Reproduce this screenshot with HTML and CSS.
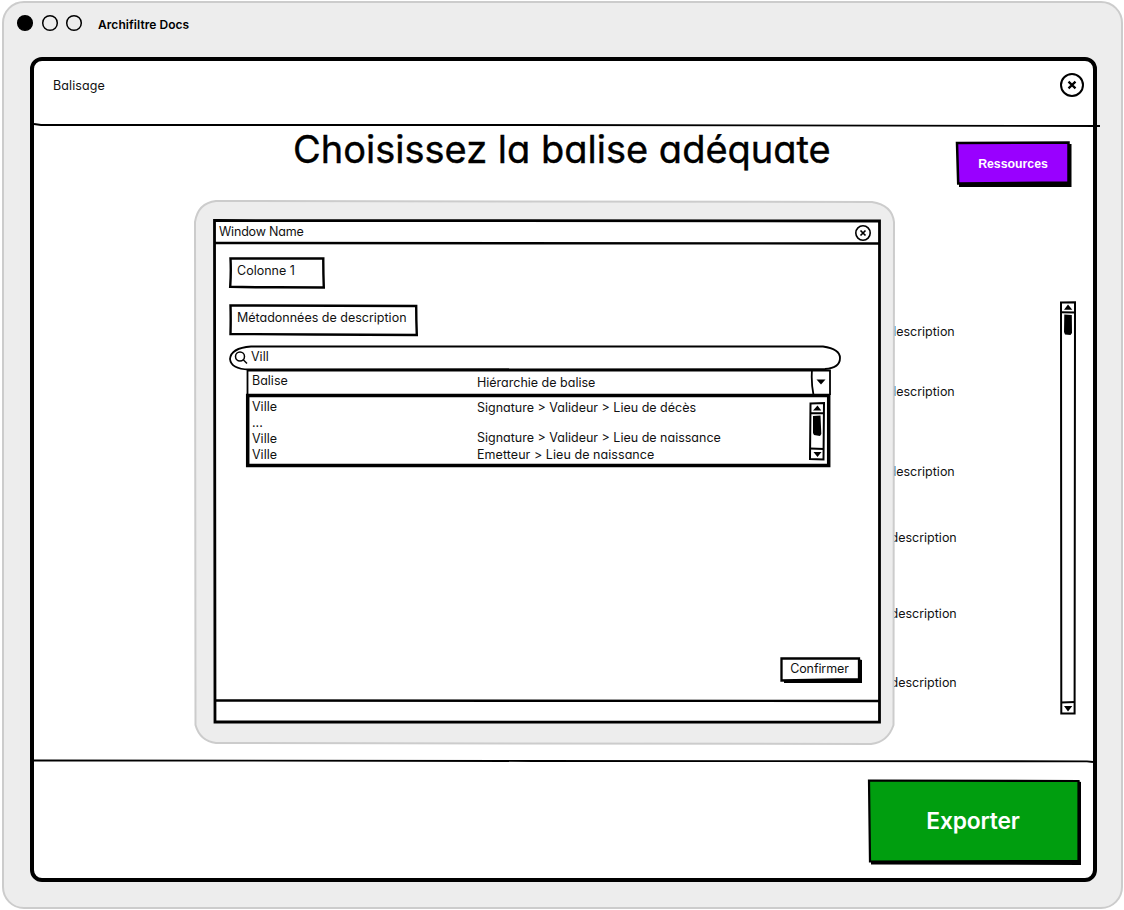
FILE: index.html
```html
<!DOCTYPE html>
<html lang="fr">
<head>
<meta charset="utf-8">
<title>Archifiltre Docs</title>
<link rel="stylesheet" href="styles.css">
</head>
<body>
<div class="app">
  <header class="app-bar">
    <svg class="dots" width="60" height="18" viewBox="0 0 60 18"><circle class="solid" cx="9" cy="9" r="7.3"/><circle cx="34" cy="9" r="7.3"/><circle cx="58" cy="9" r="7.3"/></svg>
    <span class="app-name">Archifiltre Docs</span>
  </header>
  <section class="page">
    <header class="page-head">
      <span class="page-name">Balisage</span>
      <svg class="close" width="24" height="24" viewBox="0 0 24 24"><circle cx="12" cy="12" r="11"/><path class="cross" d="M8.5 8.7l7 6.600M15.5 8.700l-7 6.600"/></svg>
    </header>
    <svg class="rule" width="1066" height="4" viewBox="0 0 1066 4"><path d="M0 1L7 2L500 2L1066 3"/></svg>
    <main class="main">
      <h1 class="title">Choisissez la balise adéquate</h1>
      <div class="side">
        <button class="btn btn-violet">
          <svg class="sketch" width="117" height="46" viewBox="0 0 117 46"><path class="fill" d="M3 41L111 41 112 3 115.500 3V46H3Z"/><path class="violet" d="M1 2L112.500 1.500 112.500 41.500 2.200 42.500Z"/></svg>
          <span>Ressources</span>
        </button>
        <div class="results">
          <ul class="descs">
            <li>description</li><li>description</li><li>description</li><li>description</li><li>description</li><li>description</li>
          </ul>
          <svg class="bar" width="16" height="414" viewBox="0 0 16 414"><path d="M1 1.500L15 1.200 14.600 412.500 1.300 412.500Z"/><path d="M1 11.300L15 11.500M1 401.500L15 401"/><path class="fill" d="M4 8.800L8 3.500 12.300 8.800ZM4 405L12.300 405 8 410.500ZM4.300 13.500L11.800 14 12 32 10.500 34 5 33.500 4 31Z"/></svg>
        </div>
      </div>
    </main>
    <footer class="page-foot">
      <svg class="rule" width="1059" height="4" viewBox="0 0 1059 4"><path d="M0 1.500L500 2 1053 2.300 1059 3"/></svg>
      <button class="btn btn-green">
        <svg class="sketch" width="213" height="86" viewBox="0 0 213 86"><path class="fill" d="M3 81L208 80 209 2 213 3V86L3 85.500Z"/><path class="green" d="M1 1.500L210.500 2 210.500 82 2 82.500Z"/></svg>
        <span>Exporter</span>
      </button>
    </footer>
  </section>
</div>

<div class="modal" role="dialog">
  <svg class="sketch" width="701" height="545" viewBox="0 0 701 545"><path class="frame" d="M22 1L678 2Q698 5 700 22L699.500 525Q694 542 677 544L22 543Q6 541 1.500 525L1 22Q4 3 22 1Z"/></svg>
  <div class="dialog">
    <svg class="sketch" width="669" height="505" viewBox="0 0 669 505"><path class="heavy" d="M1.500 1.500L666.500 2 666.500 503.200 2 503Z"/><path class="mid" d="M1 24L667 24.500M2 481.500L667 482"/></svg>
    <div class="dialog-bar"><span class="t-window">Window Name</span>
      <svg class="close small" width="16" height="16" viewBox="0 0 16 16"><circle cx="8" cy="8" r="7.200"/><path class="cross" d="M5.500 5.500l5 5M10.500 5.500l-5 5"/></svg>
    </div>
    <div class="dialog-body">
      <div class="field field-col"><svg class="sketch" width="96" height="32" viewBox="0 0 96 32"><path d="M1.500 1.500L94.300 1.500Q94.200 14 94.800 30.500L48 30.300Q20 30.300 1.200 29.800Q2.200 15 1.500 1.500Z"/></svg><span>Colonne 1</span></div>
      <div class="field field-meta"><svg class="sketch" width="189" height="32" viewBox="0 0 189 32"><path d="M1.500 1.500L187.200 2Q187.200 15 187.800 31L85 30.500 1.500 30Q1.900 14 1.500 1.500Z"/></svg><span>Métadonnées de description</span></div>
      <div class="search">
        <svg class="sketch" width="612" height="26" viewBox="0 0 612 26"><path class="thin" d="M22 1.500L594 1.500Q611 4 611 13Q611 23 596 24L20 24.500Q2 24 1 14Q2 3 22 1.500Z"/><circle class="lens" cx="11" cy="11.500" r="4.500"/><path class="lens" d="M14 14.500L18 18.500"/></svg>
        <span>Vill</span>
      </div>
      <div class="combo">
        <svg class="sketch" width="585" height="98" viewBox="0 0 585 98"><path class="thin" d="M1.500 0V26M1 .5H584V25M566 0Q565 12 567.500 25"/><path class="fill" d="M570.500 9.500H579.500L575 14.500Z"/><path class="list" d="M1.700 25.500H582.700V95.500H1.700Z"/></svg>
        <div class="combo-head"><span class="t-balise">Balise</span><span class="t-hier">Hiérarchie de balise</span></div>
        <div class="combo-list">
          <div class="names"><span>Ville</span><span>...</span><span>Ville</span><span>Ville</span></div>
          <div class="paths"><span>Signature &gt; Valideur &gt; Lieu de décès</span><span>Signature &gt; Valideur &gt; Lieu de naissance</span><span class="t-emetteur">Emetteur &gt; Lieu de naissance</span></div>
          <svg class="bar" width="16" height="59" viewBox="0 0 16 59"><path d="M1.500 1.500L15 1 14.500 57.500 1 57Z"/><path d="M1 11.300H15M1 46.500L15 47"/><path class="fill" d="M4 8.500L8.500 3.500 12.300 8.500ZM4.500 50L12.500 50 8.500 55ZM4 14L11.500 13.500 12.300 32 11 34 5 33 4 31Z"/></svg>
        </div>
      </div>
      <button class="btn btn-confirm">
        <svg class="sketch" width="82" height="26" viewBox="0 0 82 26"><path class="fill" d="M4 23Q30 20 56 22L78 22 78 2 82 3V26H4Z"/><path class="white" d="M1.500 1.500L79 1.500V22.500L57 22.500 1.500 23.500Z"/></svg>
        <span>Confirmer</span>
      </button>
    </div>
  </div>
</div>
</body>
</html>
```
FILE: styles.css
```css
* { box-sizing: border-box; }
body {
  margin: 0;
  width: 1124px;
  height: 910px;
  overflow: hidden;
  position: relative;
  background: #fff;
  color: #111;
  font: 12.5px/16px Inter, "Liberation Sans", sans-serif;
  font-feature-settings: "cv11";
}
span, li, h1 { white-space: nowrap; }
svg { display: block; fill: none; stroke: #000; stroke-width: 2; overflow: visible; }
svg .fill { fill: #000; stroke: none; }
button { font: inherit; font-feature-settings: inherit; color: inherit; border: 0; padding: 0; background: none; }
.sketch { position: absolute; left: 0; top: 0; z-index: -1; }

.app {
  margin-left: 2px;
  width: 1121px;
  height: 908px;
  padding-left: 26px;
  border: 2px solid #ccc;
  border-radius: 22px;
  background: #ededed;
  position: relative;
  top: 1px;
}
.app-bar { display: flex; gap: 22px; height: 54px; margin-left: -14px; padding-top: 11px; }
.dots { stroke-width: 1.5; }
.dots .solid { fill: #000; }
.app-name { font-weight: 600; font-size: 12px; margin-top: 3px; letter-spacing: .06px; color: #000; }

.page {
  width: 1067px;
  height: 825px;
  border: 4px solid #000;
  border-radius: 12px;
  background: #fff;
}
.page-head { display: flex; justify-content: space-between; height: 62px; padding: 12px 9px 0 19px; }
.page-name { padding-top: 5px; letter-spacing: .1px; }
.close { stroke-width: 2; }
.close .cross { stroke-width: 2.3; }
.rule { stroke-width: 1.8; }
.main { height: 632px; display: grid; grid-template-columns: 1fr 206px; }
.title { margin: 0; padding: 0 0 0 259px; font-size: 38px; line-height: 44px; font-weight: 400; color: #000; -webkit-text-stroke: .4px #000; }
.side { display: flex; flex-direction: column; align-items: flex-end; }
.btn { display: flex; align-items: center; justify-content: center; position: relative; z-index: 0; }
.btn-violet { width: 117px; height: 46px; margin: 14px 20px 0 0; padding: 0 3px 0 0; color: #fff; font: bold 12.3px/16px "Liberation Sans", sans-serif; }
.violet { fill: #90f; stroke-width: 2.5; }
.results { display: flex; justify-content: space-between; width: 206px; margin-top: 114px; padding-right: 17px; }
.bar { stroke-width: 2; }
.descs { list-style: none; margin: 0; padding: 23px 0 0 1.5px; display: grid; grid-template-rows: 60px 80px 66px 76px 69px 16px; }
.descs li:nth-child(n+4) { padding-left: 2px; }
.page-foot { display: flex; flex-direction: column; align-items: flex-end; }
.btn-green { width: 213px; height: 86px; margin: 16px 12px 0 0; padding: 0 3px 3px 0; font-size: 22.8px; font-weight: 600; letter-spacing: -.15px; color: #fff; }
.green { fill: #009e0f; stroke-width: 2.2; }

.modal { position: absolute; left: 194px; top: 200px; width: 701px; height: 545px; padding: 19px; z-index: 1; }
.frame { fill: #ededed; stroke: #ccc; }
.dialog { position: relative; z-index: 0; width: 669px; height: 505px; }
.heavy { fill: #fff; stroke-width: 2.8; }
.mid { stroke-width: 2.4; }
.dialog-bar { display: flex; justify-content: space-between; height: 24px; padding: 5px 11px 0 6px; }
.t-window { letter-spacing: -.2px; }
.small { stroke-width: 1.6; margin-top: 1px; }
.small .cross { stroke-width: 1.7; }
.dialog-body { padding: 14px 0 0 16px; display: flex; flex-direction: column; align-items: flex-start; }
.field { position: relative; z-index: 0; height: 32px; padding: 6px 0 0 8px; }
.field .sketch { stroke-width: 2.4; }
.field-col { width: 96px; margin-bottom: 15px; }
.field-meta { width: 189px; margin-bottom: 9px; }
.search { position: relative; z-index: 0; width: 612px; height: 25px; padding: 4px 0 0 22px; }
.thin { stroke-width: 1.8; }
.lens { stroke-width: 1.5; }
.combo { position: relative; z-index: 0; width: 585px; height: 98px; margin-left: 17px; }
.list { stroke-width: 3.5; }
.combo-head { display: grid; grid-template-columns: 225px 1fr; padding: 3px 0 0 6px; height: 26px; }
.t-hier { padding-top: 2px; }
.combo-list { display: grid; grid-template-columns: 225px 1fr 16px; padding: 3px 6px 0 6px; }
.names { display: grid; grid-template-rows: 16px 16px 16px 16px; align-content: start; }
.paths { display: grid; grid-template-rows: 30px 17px 16px; align-content: start; padding-top: 1px; }
.t-emetteur { letter-spacing: .06px; }
.combo-list .bar { margin-top: 3px; }
.btn-confirm { width: 82px; height: 26px; padding: 0 3px 3px 0; margin: 189px 0 0 551px; letter-spacing: -.1px; }
.white { fill: #fff; stroke-width: 2.3; }
```
